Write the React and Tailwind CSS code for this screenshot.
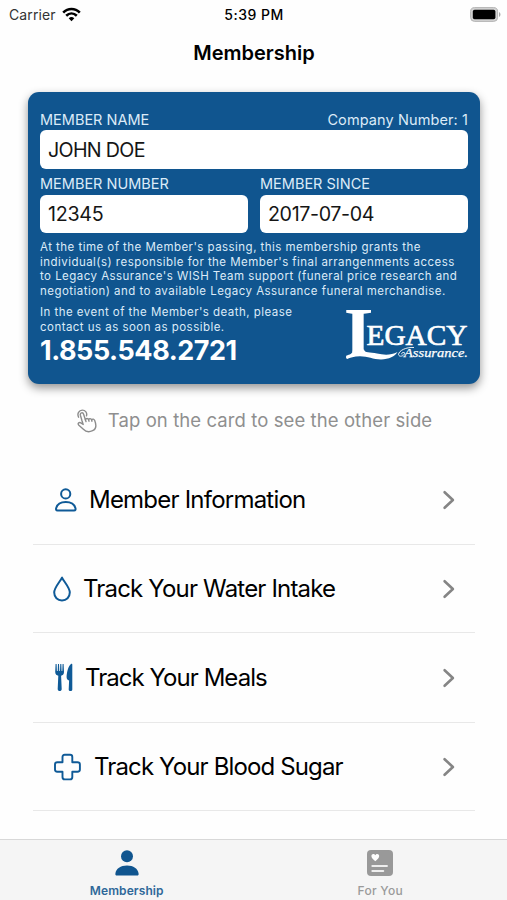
import React from "react";

const stroke = { fill: "none", stroke: "#0f5a97", strokeWidth: 2, strokeLinejoin: "round", strokeLinecap: "round" };

function Chevron() {
  return (
    <svg width="14" height="20" viewBox="0 0 14 20" className="shrink-0">
      <path d="M2.6 2.2 L10.9 10 L2.6 17.8" fill="none" stroke="#858585" strokeWidth="2.6" strokeLinecap="round" strokeLinejoin="round" />
    </svg>
  );
}

function PersonIcon() {
  return (
    <svg width="22" height="24" viewBox="0 0 22 24" {...stroke} className="shrink-0">
      <circle cx="10.7" cy="5.9" r="4.6" strokeWidth="2" />
      <path d="M2.6 22.4 C1 22.4 0.8 21.4 1.2 20 C2.2 16.4 6 14 10.8 14 C15.6 14 19.4 16.4 20.4 20 C20.8 21.4 20.6 22.4 19 22.4 Z" strokeWidth="2" />
    </svg>
  );
}

function DropIcon() {
  return (
    <svg width="18" height="26" viewBox="0 0 18 26" {...stroke} className="shrink-0">
      <path d="M9 1.6 C7.2 5.6 1.2 11.4 1.2 16.6 C1.2 21.2 4.5 24.4 9 24.4 C13.5 24.4 16.8 21.2 16.8 16.6 C16.8 11.4 10.8 5.6 9 1.6 Z" />
    </svg>
  );
}

function UtensilsIcon() {
  return (
    <svg width="18" height="29" viewBox="0 0 18 29" className="shrink-0" fill="#0f5a97">
      <path d="M0.6 1 H1.6 L1.9 8 H2.7 L3 1 H4 L4.3 8 H5 L5.3 1 H6.3 L6.6 8 H7.3 L7.6 1 H8.6 L9 9 C9 11.4 7.6 12.4 6.1 12.8 L6.7 26 C6.7 28.8 2.7 28.8 2.7 26 L3.3 12.8 C1.8 12.4 0.2 11.4 0.2 9 Z" />
      <path d="M17.3 1.6 V26.4 C17.3 28.6 13.7 28.6 13.7 26.4 L14.1 17.6 C12.4 16.8 11.6 16 11.6 14 C11.8 9 13.2 3.4 16 1 C16.8 0.5 17.3 0.8 17.3 1.6 Z" />
    </svg>
  );
}

function CrossIcon() {
  return (
    <svg width="27" height="28" viewBox="0.5 0 27 28" {...stroke} className="shrink-0">
      <path d="M11.2 1.8 H16.6 Q18.8 1.8 18.8 4 V9.2 H24 Q26.4 9.2 26.4 11.4 V16.6 Q26.4 18.8 24 18.8 H18.8 V24 Q18.8 26.4 16.6 26.4 H11.2 Q9 26.4 9 24 V18.8 H3.8 Q1.5 18.8 1.5 16.6 V11.4 Q1.5 9.2 3.8 9.2 H9 V4 Q9 1.8 11.2 1.8 Z" strokeWidth="1.9" />
    </svg>
  );
}

function TapIcon() {
  return (
    <svg width="20" height="24" viewBox="0 0 20 24" fill="none" stroke="#8c8c8c" strokeWidth="1.4" strokeLinecap="round" strokeLinejoin="round" className="shrink-0">
      <path d="M1.6 8.2 C-0.2 4.6 2 1.1 5.3 1.1 C8.4 1.1 10.4 3.9 9.5 6.8" />
      <path d="M5 11.8 L3.4 6.2 C2.8 3.7 5.9 2.9 6.6 5.2 L8.4 10.7 C9 9.1 11 9.1 11.6 10.6 C12.3 9.2 14 9.3 14.6 10.8 C15.6 9.6 17.1 10 17.7 11.6 C19.3 15.6 19.4 20 15.6 21.7 C12 23.4 8.6 22.6 6.4 20.3 L1.6 15.9 C0.4 14.2 2.3 13 3.8 13.9 L6.2 15.4 Z" />
      <path d="M8.4 10.7 L9 12.6 M11.6 10.6 L12 12.2 M14.6 10.8 L15 12.2" />
    </svg>
  );
}

function Logo() {
  return (
    <svg width="126" height="56" viewBox="344 306 126 56" fill="#fff" className="shrink-0">
      <clipPath id="stem"><path d="M340 300 H371.5 V330 H364 V352.5 H340 Z" /></clipPath>
      <g clipPath="url(#stem)">
        <text x="345" y="359" fontSize="73" className="font-['Liberation_Serif',serif] font-bold">L</text>
      </g>
      <path d="M353 350 C352.5 354 349.5 354.6 346.5 355.6 C345.6 357 346 358.8 347.2 359 C350 357.8 354 356.2 360 356.2 C368 356.2 373 359.4 381 359.4 C389 359.4 395 356.4 397.5 352 C391 355.4 384 355 377 353.6 C370 352.4 364.5 353 364 349.6 Z" />
      <text x="366.5" y="345" fontSize="28.5" textLength="101" lengthAdjust="spacingAndGlyphs" stroke="#fff" strokeWidth="0.7" className="font-['Liberation_Serif',serif]">EGACY</text>
      <text x="404" y="357" fontSize="13" textLength="64" lengthAdjust="spacingAndGlyphs" stroke="#fff" strokeWidth="0.25" className="font-['Liberation_Serif',serif] italic">Assurance.</text>
      <path d="M414 347.5 C406 347 399 350.5 398.5 354.5 C399.2 357.4 403.4 356.4 405 353.2 C403 351.6 401 353 402 354.4" fill="none" stroke="#fff" strokeWidth="0.9" />
    </svg>
  );
}

const rows = [
  { label: "Member Information", Icon: PersonIcon, h: "h-[89px]", gap: "gap-[12px]", pl: "pl-[22px]", tr: "tracking-[-0.78px]" },
  { label: "Track Your Water Intake", Icon: DropIcon, h: "h-[88px]", gap: "gap-[12px]", pl: "pl-[20px]", tr: "tracking-[-0.82px]" },
  { label: "Track Your Meals", Icon: UtensilsIcon, h: "h-[90px]", gap: "gap-[12px]", pl: "pl-[22px]", tr: "tracking-[-0.95px]" },
  { label: "Track Your Blood Sugar", Icon: CrossIcon, h: "h-[88px]", gap: "gap-[13px]", pl: "pl-[21px]", tr: "tracking-[-0.86px]" },
];

function Field({ label, value, tracking, labelPad }) {
  return (
    <div>
      <div className={`h-[22px] text-[14.5px] leading-[18px] text-[#dcebf8] ${labelPad}`}>{label}</div>
      <div className={`flex h-[38.5px] items-center rounded-[6px] bg-white px-2 pt-[2px] text-[19.7px] text-[#151515] ${tracking}`}>{value}</div>
    </div>
  );
}

export default function App() {
  return (
    <div className="flex h-[900px] w-[507px] flex-col overflow-hidden bg-[#fefefe] font-['Inter',sans-serif] whitespace-nowrap text-black">
      <header className="grid h-7 grid-cols-3 items-center pr-[6px] pl-[9px] text-[14px]">
        <div className="flex items-center gap-[6px] text-[#333]">
          <span className="tracking-[0.1px]">Carrier</span>
          <svg width="19" height="15" viewBox="0 0 19 15" fill="none" stroke="#000" strokeWidth="2.6">
            <path d="M1.2 5.6 C6 0.7 13 0.7 17.8 5.6" />
            <path d="M4.2 8.8 C7.4 5.7 11.6 5.7 14.8 8.8" />
            <path d="M6.7 11.2 C8.4 9.6 10.6 9.6 12.3 11.2 L9.5 14.2 Z" fill="#000" stroke="none" />
          </svg>
        </div>
        <div className="-ml-[2px] text-center font-medium tracking-[0.5px]">5:39 PM</div>
        <svg width="31" height="15" viewBox="0 0 31 15" className="justify-self-end">
          <rect x="0.6" y="0.6" width="27" height="13.8" rx="4" fill="#d2d2d2" stroke="#b4b4b4" />
          <rect x="2.8" y="2.8" width="22.6" height="9.4" rx="1.8" fill="#000" />
          <path d="M29 5 C31 6 31 9 29 10 Z" fill="#aaa" />
        </svg>
      </header>
      <h1 className="h-16 pt-[12px] pl-px text-center text-[20px] leading-[27px] font-semibold">Membership</h1>

      <section className="ml-7 h-[292px] w-[452px] rounded-[11px] bg-[#10558f] px-3 pt-4 text-[#dcebf8] shadow-[0_4px_10px_rgba(0,0,0,0.42)]">
        <div className="relative">
          <Field label="MEMBER NAME" value="JOHN DOE" tracking="tracking-[-0.7px] pt-[3px]" labelPad="pt-[3px]" />
          <span className="absolute top-[3px] right-0 text-[14.5px] leading-[18px] tracking-[0.1px]">Company Number: 1</span>
        </div>
        <div className="mt-[4px] grid grid-cols-2 gap-3">
          <Field label="MEMBER NUMBER" value="12345" tracking="tracking-[-0.3px]" labelPad="pt-[2px]" />
          <Field label="MEMBER SINCE" value="2017-07-04" tracking="tracking-[-0.4px]" labelPad="pt-[2px]" />
        </div>
        <p className="mt-[7px] text-[11.5px] leading-[14.7px] tracking-[0.46px]">
          At the time of the Member's passing, this membership grants the<br />
          individual(s) responsible for the Member's final arrangenments access<br />
          to Legacy Assurance's WISH Team support (funeral price research and<br />
          negotiation) and to available Legacy Assurance funeral merchandise.
        </p>
        <div className="mt-[6px] flex justify-between">
          <div>
            <p className="text-[11.5px] leading-[14.7px] tracking-[0.46px]">
              In the event of the Member's death, please<br />
              contact us as soon as possible.
            </p>
            <div className="text-[27px] leading-[33px] font-bold tracking-[-0.45px] text-white">1.855.548.2721</div>
          </div>
          <div className="-mr-[2px] pt-[1px]"><Logo /></div>
        </div>
      </section>

      <div className="flex h-[72px] items-center justify-center gap-[11px] pt-[2px] pl-[2px] text-[18.5px] text-[#8f8f8f]">
        <TapIcon />
        <span className="tracking-[0.09px]">Tap on the card to see the other side</span>
      </div>

      <main className="ml-[33px] w-[442px]">
        {rows.map(({ label, Icon, h, gap, pl, tr }) => (
          <div key={label} className={`flex items-center justify-between border-b border-[#e8e8e8] pr-[19px] ${h} ${pl}`}>
            <div className={`flex items-center ${gap}`}>
              <Icon />
              <span className={`text-[24px] ${tr}`}>{label}</span>
            </div>
            <Chevron />
          </div>
        ))}
      </main>

      <nav className="mt-auto grid h-[61px] grid-cols-2 border-t border-[#d8d8d8] bg-[#f5f5f5] text-[12px] font-semibold">
        <div className="flex flex-col items-center pt-[10px] text-[#2f6899]">
          <svg width="24" height="26" viewBox="0 0 24 26" fill="#10558f">
            <circle cx="12" cy="6.2" r="6" />
            <path d="M2 25.6 C0.6 25.6 0.2 24.8 0.4 23.4 C1 18.4 5.6 15.4 12 15.4 C18.4 15.4 23 18.4 23.6 23.4 C23.8 24.8 23.4 25.6 22 25.6 Z" />
          </svg>
          <span className="mt-[7px] leading-4 tracking-[0.1px]">Membership</span>
        </div>
        <div className="flex flex-col items-center pt-[10px] font-medium text-[#9a9a9a]">
          <svg width="26" height="26" viewBox="0 0 26 26">
            <rect width="26" height="26" rx="4" fill="#999" />
            <path d="M8.3 11.2 C5.8 9 4.4 7.8 4.4 6 C4.4 3.8 7.2 3.2 8.3 5.2 C9.4 3.2 12.2 3.8 12.2 6 C12.2 7.8 10.8 9 8.3 11.2 Z" fill="#fff" />
            <path d="M5.3 16 H20 M5.3 21 H16.3" stroke="#eee" strokeWidth="1.9" strokeLinecap="round" />
          </svg>
          <span className="mt-[7px] leading-4 tracking-[0.3px]">For You</span>
        </div>
      </nav>
    </div>
  );
}
